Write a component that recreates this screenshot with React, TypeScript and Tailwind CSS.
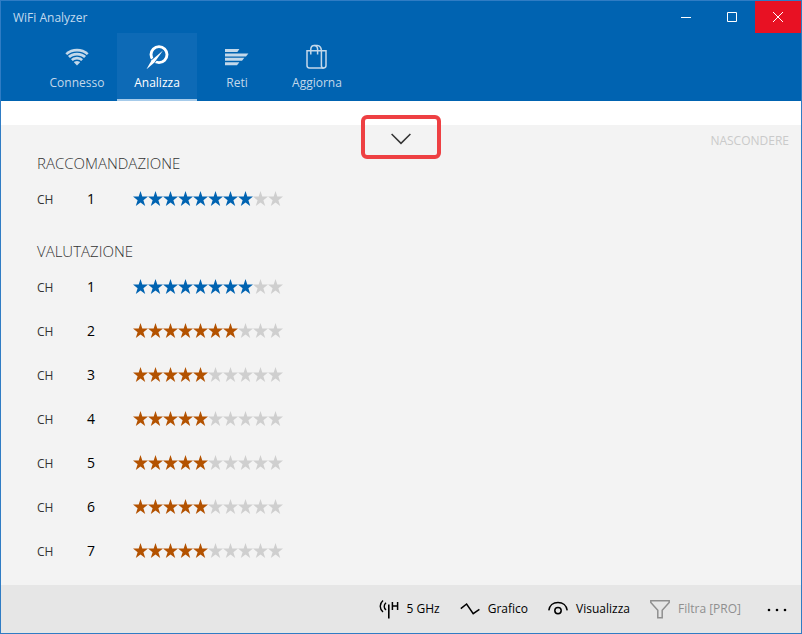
import type { ReactNode } from 'react'

const STAR_COUNT = 10

const ratings = [
    { channel: 1, stars: 8 },
    { channel: 2, stars: 7 },
    { channel: 3, stars: 5 },
    { channel: 4, stars: 5 },
    { channel: 5, stars: 5 },
    { channel: 6, stars: 5 },
    { channel: 7, stars: 5 },
]

function WifiIcon() {
    return (
        <svg width="24" height="24" viewBox="0 0 24 24" fill="none">
            <path d="M12 20.6L.4 8.2C6.8 2.4 17.2 2.4 23.6 8.2Z" fill="currentColor" />
            {/* gaps between the waves */}
            <g stroke="#0063b1" strokeWidth="1.3">
                <path d="M1.6 11.2C7.4 5.8 16.6 5.8 22.4 11.2" />
                <path d="M4.6 14.2C9 10 15 10 19.4 14.2" />
                <path d="M7.4 17.2C10 14.6 14 14.6 16.6 17.2" />
            </g>
        </svg>
    )
}

function AnalyzeIcon() {
    return (
        <svg width="24" height="24" viewBox="0 0 24 24" fill="none" stroke="currentColor">
            <circle cx="14" cy="9.6" r="8" strokeWidth="2.9" />
            <path
                d="M18 5.4L9.4 17.4L1.4 24.4L6.6 15.2Z"
                fill="currentColor"
                stroke="#0d6ab6"
                strokeWidth="1.6"
                paintOrder="stroke"
            />
        </svg>
    )
}

function NetworksIcon() {
    return (
        <svg width="24" height="24" viewBox="0 0 24 24" fill="currentColor">
            <path d="M0 4H14.4L12.4 7H0Z" />
            <path d="M0 8.4H23.4L21 11.4H0Z" />
            <path d="M0 12.8H19.4L17 15.8H0Z" />
            <path d="M0 17.2H14.4L12 20.2H0Z" />
        </svg>
    )
}

function BagIcon() {
    return (
        <svg width="24" height="26" viewBox="0 0 24 26" fill="none" stroke="currentColor" strokeWidth="1.5">
            <path d="M2 6.8H21V21.6Q21 24 18.6 24H4.4Q2 24 2 21.6Z" />
            <path d="M16.4 6.8V21.4Q16.4 24 18.8 24" />
            <path d="M5.8 10.4V5Q6 1.4 9.2 1.4Q12.4 1.4 12.6 5V10.4" />
            <path d="M9.4 1.4H12.2Q16.2 1.6 16.4 6.8" />
        </svg>
    )
}

function AntennaIcon() {
    return (
        <svg width="20" height="20" viewBox="0 0 20 20" fill="none" stroke="currentColor" strokeWidth="1.4">
            <path d="M4 1.6C.3 5 .3 9.6 4 13" />
            <path d="M7 3.8C4.6 6 4.6 8.8 7 11" />
            <path d="M9.8 5.4V19.6" strokeWidth="1.6" />
            <path d="M13.4 3V11M18.6 3V11M13.4 7H18.6" strokeWidth="1.5" />
        </svg>
    )
}

function GraphIcon() {
    return (
        <svg width="20" height="20" viewBox="0 0 20 20" fill="none" stroke="currentColor" strokeWidth="1.5">
            <path d="M.8 9.6L6.6 5L13.2 14.6L19.4 10.4" />
        </svg>
    )
}

function EyeIcon() {
    return (
        <svg width="20" height="20" viewBox="0 0 20 20" fill="none" stroke="currentColor" strokeWidth="1.5">
            <path d="M.8 11.4C1.4 6.4 5.2 3.4 10 3.4S18.6 6.4 19.2 11.4" />
            <circle cx="10" cy="11.6" r="3.2" />
        </svg>
    )
}

function FilterIcon() {
    return (
        <svg width="20" height="20" viewBox="0 0 20 20" fill="none" stroke="currentColor" strokeWidth="1.5">
            <path d="M.8 1.8H19.2V3.4L12.2 11.2V18.8H7.8V11.2L.8 3.4Z" />
        </svg>
    )
}

function Tab({ label, icon, active = false }: { label: string; icon: ReactNode; active?: boolean }) {
    return (
        <button
            role="tab"
            aria-selected={active}
            className={`flex w-20 flex-col items-center border-b-2 pt-3 ${
                active ? 'border-[#a6cbea] bg-[#0d6ab6] text-white' : 'border-transparent text-[#c3d8ea]'
            }`}
        >
            <span className="flex h-6 items-center">{icon}</span>
            <span className="mt-1.5 text-[12px] leading-4">{label}</span>
        </button>
    )
}

function Stars({ value, color }: { value: number; color: string }) {
    return (
        <div className="flex" role="img" aria-label={`${value} / ${STAR_COUNT}`}>
            {Array.from({ length: STAR_COUNT }, (_, i) => (
                <svg
                    key={i}
                    width="15"
                    height="16"
                    viewBox="0 0 15 16"
                    fill="currentColor"
                    className={i < value ? color : 'text-[#cfcfcf]'}
                >
                    <path d="M7.5 0L9.3 5.6H15L10.4 9.2L12.2 15L7.5 11.5L2.8 15L4.6 9.2L0 5.6H5.7Z" />
                </svg>
            ))}
        </div>
    )
}

function ChannelTable({ title, rows }: { title: string; rows: { channel: number; stars: number }[] }) {
    return (
        <section>
            <h2 className="flex h-11 items-end pb-1 text-[15px] leading-5 font-light text-[#333]">{title}</h2>
            <table aria-label={title}>
                <tbody>
                    {rows.map((row) => (
                        <tr key={row.channel} className="h-11">
                            <th scope="row" className="w-[50px] p-0 pt-0.5 text-left text-[12px] font-normal text-[#333]">CH</th>
                            <td className="w-[46px] p-0 pb-0.5 text-[14px] text-black">{row.channel}</td>
                            <td className="p-0">
                                <Stars value={row.stars} color={row.stars >= 8 ? 'text-[#0063b1]' : 'text-[#b35200]'} />
                            </td>
                        </tr>
                    ))}
                </tbody>
            </table>
        </section>
    )
}

function Command({ label, icon, disabled = false }: { label: string; icon: ReactNode; disabled?: boolean }) {
    return (
        <button disabled={disabled} className="flex items-center gap-2 text-[12px] leading-4 text-black disabled:text-[#8f8f8f]">
            {icon}
            {label}
        </button>
    )
}

export default function App() {
    return (
        <div className="flex min-h-screen flex-col border border-[#2f7cc4] bg-white font-['Segoe_UI','Open_Sans',sans-serif]">
            <header className="bg-[#0063b1]">
                <div className="flex h-8 items-center">
                    <h1 className="flex-1 pt-0.5 pl-3 text-[12px] leading-4 text-[#c3daee]">WiFi Analyzer</h1>
                    <div className="flex h-full text-white">
                        <button aria-label="Riduci a icona" className="flex w-[46px] items-center justify-center">
                            <svg width="10" height="10" viewBox="0 0 10 10" stroke="currentColor">
                                <path d="M0 5.5H10" />
                            </svg>
                        </button>
                        <button aria-label="Ingrandisci" className="flex w-[46px] items-center justify-center">
                            <svg width="10" height="10" viewBox="0 0 10 10" fill="none" stroke="currentColor">
                                <path d="M.5 .5H9.5V9.5H.5Z" />
                            </svg>
                        </button>
                        <button aria-label="Chiudi" className="flex w-[46px] items-center justify-center bg-[#e81123]">
                            <svg width="10" height="10" viewBox="0 0 10 10" stroke="currentColor">
                                <path d="M0 0L10 10M10 0L0 10" />
                            </svg>
                        </button>
                    </div>
                </div>
                <nav role="tablist" className="flex h-[68px] pl-9">
                    <Tab label="Connesso" icon={<WifiIcon />} />
                    <Tab label="Analizza" icon={<AnalyzeIcon />} active />
                    <Tab label="Reti" icon={<NetworksIcon />} />
                    <Tab label="Aggiorna" icon={<BagIcon />} />
                </nav>
            </header>

            <main className="relative mt-6 flex-1 bg-[#f3f3f3] px-9 pt-2">
                {/* expander sits across the top edge of the panel */}
                <button
                    aria-label="Espandi"
                    className="absolute -top-2.5 left-1/2 flex h-11 w-20 -translate-x-1/2 items-center justify-center rounded-md border-4 border-[#ee4043] pt-1 text-[#333]"
                >
                    <svg width="20" height="12" viewBox="0 0 20 12" fill="none" stroke="currentColor" strokeWidth="1.5">
                        <path d="M.6 1L10 10.4L19.4 1" />
                    </svg>
                </button>
                <button disabled className="absolute top-2 right-3 text-[12px] leading-4 text-[#cacaca]">
                    NASCONDERE
                </button>
                <ChannelTable title="RACCOMANDAZIONE" rows={ratings.slice(0, 1)} />
                <ChannelTable title="VALUTAZIONE" rows={ratings} />
            </main>

            <footer className="flex h-12 items-center justify-end gap-5 bg-[#e6e6e6] pr-3">
                <Command label="5 GHz" icon={<AntennaIcon />} />
                <Command label="Grafico" icon={<GraphIcon />} />
                <Command label="Visualizza" icon={<EyeIcon />} />
                <Command label="Filtra [PRO]" icon={<FilterIcon />} disabled />
                <button aria-label="Altro" className="flex h-full items-center pl-1">
                    <svg width="24" height="20" viewBox="0 0 24 20" fill="currentColor">
                        <circle cx="4" cy="11" r="1.3" />
                        <circle cx="12" cy="11" r="1.3" />
                        <circle cx="20" cy="11" r="1.3" />
                    </svg>
                </button>
            </footer>
        </div>
    )
}
